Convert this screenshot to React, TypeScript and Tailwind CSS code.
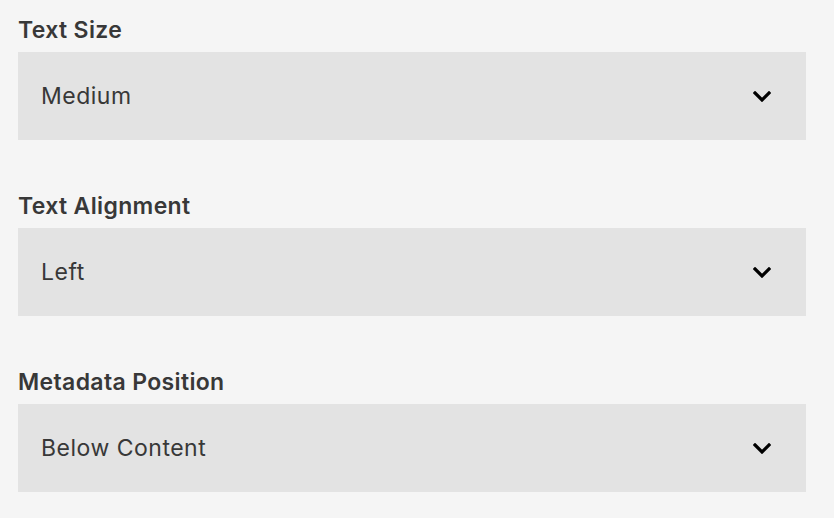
const fields = [
  { label: "Text Size", value: "Medium" },
  { label: "Text Alignment", value: "Left" },
  { label: "Metadata Position", value: "Below Content" },
];

function Chevron() {
  return (
    <svg width="18" height="11" viewBox="0 0 18 11" fill="none">
      <path
        d="M2 2L9 9L16 2"
        stroke="#000"
        strokeWidth="3.2"
        strokeLinecap="square"
        strokeLinejoin="miter"
      />
    </svg>
  );
}

export default function App() {
  return (
    <div className="min-h-[518px] w-full bg-[#f5f5f5] px-[18px] pr-[28px] pt-4 pb-[26px] font-['Inter',sans-serif] text-[#383838]">
      <div className="flex flex-col gap-[52px]">
        {fields.map((f) => (
          <div key={f.label} className="flex flex-col gap-2">
            <label className="text-[23px] leading-[28px] font-semibold tracking-[0.35px]">
              {f.label}
            </label>
            <div className="flex h-[88px] items-center justify-between bg-[#e3e3e3] pl-[23px] pr-[35px]">
              <span className="text-[23px] leading-[28px] tracking-[0.5px]">{f.value}</span>
              <Chevron />
            </div>
          </div>
        ))}
      </div>
    </div>
  );
}
